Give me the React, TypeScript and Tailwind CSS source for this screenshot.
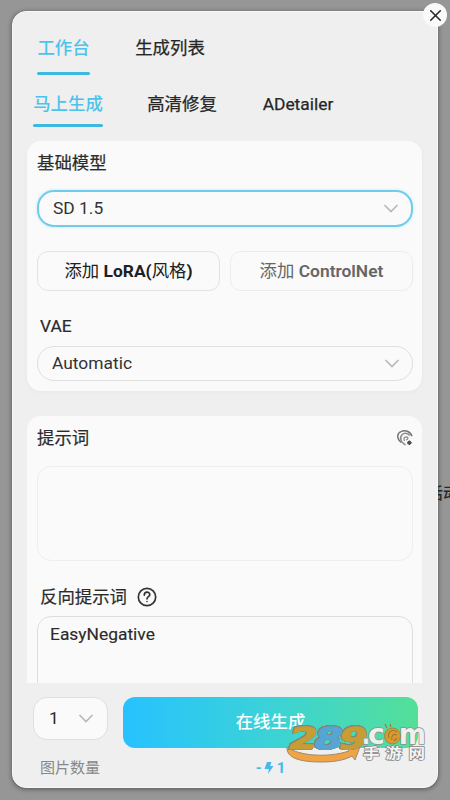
import { X } from "lucide-react";

const mainTabs = [
  { id: 1, title: "工作台", active: true, width: "w-[53px]", margin: "ml-[24px]" },
  { id: 2, title: "生成列表", active: false, width: "w-[70px]", margin: "ml-[45px]" },
];

const subTabs = [
  { id: 1, title: "马上生成", active: true, width: "w-[70px]", margin: "ml-[20px]" },
  { id: 2, title: "高清修复", active: false, width: "w-[70px]", margin: "ml-[44px]" },
  { id: 3, title: "ADetailer", active: false, width: "w-[72px]", margin: "ml-[45px]" },
];

function Tabs({ items, className }: { items: typeof mainTabs; className: string }) {
  return (
    <nav className={`flex ${className}`}>
      {items.map((tab) => (
        <button
          key={tab.id}
          className={`flex flex-col justify-between whitespace-nowrap text-[17.4px] leading-6 ${tab.width} ${tab.margin} ${
            tab.active ? "font-medium text-[#4dc3ea]" : "text-[#262626] [-webkit-text-stroke:0.25px_#262626]"
          }`}
        >
          <span>{tab.title}</span>
          {tab.active && <span className="h-[3px] w-full rounded-full bg-[#3cb9e3]" />}
        </button>
      ))}
    </nav>
  );
}

function Chevron() {
  return (
    <svg className="h-[9px] w-[14px]" viewBox="0 0 14 9" fill="none" stroke="#b9b9b9" strokeWidth="1.7">
      <path d="M1 1.5l6 6L13 1.5" strokeLinecap="round" />
    </svg>
  );
}

function Select({ value, className }: { value: string; className: string }) {
  return (
    <div
      className={`flex items-center justify-between rounded-[17px] pl-[14px] pr-[13px] text-[17.4px] text-[#333] ${className}`}
    >
      <span>{value}</span>
      <Chevron />
    </div>
  );
}

function HelpIcon() {
  return (
    <svg className="ml-[10px] h-5 w-5" viewBox="0 0 20 20" fill="none" stroke="#333" strokeWidth="1.7">
      <circle cx="10" cy="10" r="8.7" />
      <path d="M7.3 8.1c0-3.8 5.5-3.8 5.5-.4 0 1.9-2.8 2-2.8 4.1" strokeLinecap="round" />
      <circle cx="10" cy="14.5" r=".8" fill="#333" stroke="none" />
    </svg>
  );
}

function PaletteIcon() {
  return (
    <svg className="h-4 w-4" viewBox="0 0 16 16" fill="none" stroke="#777" strokeWidth="1.5">
      <path d="M4 12.5C-.5 9-.2 3.2 4 1.6 8-.3 13 1 15 6.3" />
      <path d="M8.5 15C4 13 2 8 5 4.8c2.5-2.5 6.4-1.4 7.6.8" stroke="#8c8c8c" />
      <path d="M7.5 11c-1.2-2.5-.5-4 1.5-4.2 1.8 0 2.4 1.4 1.4 2.4L9 10" stroke="#8c8c8c" strokeWidth="1.3" />
      <circle cx="12.3" cy="12.8" r="2" fill="#444" stroke="none" />
      <path d="M10 12.8h5M12.5 10.5v4.6" stroke="#555" strokeWidth="1" />
    </svg>
  );
}

function Watermark() {
  return (
    <svg className="absolute left-[285px] top-[720px] h-[46px] w-[148px] overflow-visible" viewBox="0 0 148 46">
      <path
        d="M2 27c-1 11 13 15 34 15 14 0 24-2 31-6l3 4 6-16-15 4 3 3c-21 7-50 5-62-4z"
        fill="#f2a343"
        stroke="#978c7b"
        strokeWidth="1"
      />
      <g
        className="[filter:drop-shadow(0.6px_0_0_#85867a)_drop-shadow(-0.6px_0_0_#85867a)_drop-shadow(0_0.6px_0_#85867a)_drop-shadow(0_-0.6px_0_#85867a)]"
        fontFamily="'DejaVu Sans', sans-serif"
        fontWeight="700"
        fontSize="30"
        strokeWidth="1.2"
        strokeLinejoin="miter"
      >
        <text transform="translate(2 28.5) skewX(-14)" textLength="28" lengthAdjust="spacingAndGlyphs" fill="#c79d35" stroke="#c79d35">2</text>
        <text transform="translate(27 28.5) skewX(-14)" textLength="28" lengthAdjust="spacingAndGlyphs" fill="#55a5d5" stroke="#55a5d5">8</text>
        <text transform="translate(52 28.5) skewX(-14)" textLength="28" lengthAdjust="spacingAndGlyphs" fill="#c79d35" stroke="#c79d35">9</text>
      </g>
      <g
        fontFamily="'DejaVu Sans', sans-serif"
        fontWeight="700"
        fontSize="28"
        fill="#efefef"
        stroke="#899486"
        strokeWidth="1.6"
        strokeLinejoin="round"
        paintOrder="stroke"
      >
        <text x="77" y="24" textLength="8" lengthAdjust="spacingAndGlyphs">.</text>
        <text x="83" y="24" textLength="17" lengthAdjust="spacingAndGlyphs">c</text>
        <text x="114" y="24" textLength="27" lengthAdjust="spacingAndGlyphs">m</text>
      </g>
      <circle cx="107.5" cy="16" r="8" fill="#d99b30" stroke="#9b8748" />
      <path d="M112 12c-5-4-10 1-8 6M112 15c-4-2-6 1-5 5M112 18l-3 3M102 8l-2-4M106 7l-1-3" fill="none" stroke="#9b772f" strokeWidth="1.1" />
      <g
        fontFamily="'Noto Sans CJK SC', sans-serif"
        fontWeight="700"
        fontSize="16.5"
        fill="#f5f5f5"
        stroke="#858585"
        strokeWidth="1.7"
        paintOrder="stroke"
      >
        <text transform="translate(78 38) scale(1 .86)">手</text>
        <text transform="translate(100.5 38) scale(1 .86)">游</text>
        <text transform="translate(123.5 38) scale(1 .86)">网</text>
      </g>
    </svg>
  );
}

export default function App() {
  return (
    <div className="relative h-[800px] w-[450px] overflow-hidden bg-[#969696] pl-3 pt-[11px] font-['Roboto','Noto_Sans_CJK_SC',sans-serif] text-[#2b2b2b]">
      <span className="absolute left-[427px] top-[484px] whitespace-nowrap text-[16px] font-medium leading-5 text-[#292929]">活动</span>

      <main className="relative flex h-[777px] w-[426px] flex-col overflow-hidden rounded-[14px] border border-[#f8f8f8] bg-[#efefef] shadow-[0_1px_5px_rgba(0,0,0,0.45)]">
        <header className="flex h-[129px] shrink-0 flex-col gap-[17px] pt-[23px]">
          <Tabs items={mainTabs} className="h-10 pt-px" />
          <Tabs items={subTabs} className="h-[35px]" />
        </header>

        <div className="flex min-h-0 flex-1 flex-col gap-[25px] overflow-hidden px-[14px]">
          <section className="h-[250px] w-[395px] shrink-0 rounded-[14px] bg-[#fafafa] pl-[10px] pr-[9px] pt-[10px] shadow-[0_1px_4px_rgba(0,0,0,0.035)]">
            <h2 className="text-[17.4px] leading-6 [-webkit-text-stroke:0.2px_#2b2b2b]">基础模型</h2>
            <Select value="SD 1.5" className="mt-[15px] h-[37px] border-2 border-[#71cce9] shadow-[0_0_3px_#b9eafa]" />
            <div className="mt-6 grid grid-cols-2 gap-[10px]">
              <button className="h-10 rounded-[11px] border-[1.5px] border-[#e3e3e3] text-[17.4px] text-[#202020]">
                添加 <span className="font-bold">LoRA(</span>风格<span className="font-bold">)</span>
              </button>
              <button className="h-10 rounded-[11px] border-[1.5px] border-[#ececec] text-[17.4px] text-[#666]">
                添加 <span className="font-semibold">ControlNet</span>
              </button>
            </div>
            <h2 className="ml-[3px] mt-[23px] text-[17.4px] leading-6 [-webkit-text-stroke:0.2px_#2b2b2b]">VAE</h2>
            <Select value="Automatic" className="mt-2 h-[35px] border-[1.5px] border-[#dfdfdf]" />
          </section>

          <section className="h-[300px] w-[395px] shrink-0 rounded-[14px] bg-[#fafafa] pl-[10px] pr-[9px] pt-[10px]">
            <div className="flex items-center justify-between">
              <h2 className="text-[17.4px] leading-6 [-webkit-text-stroke:0.2px_#2b2b2b]">提示词</h2>
              <PaletteIcon />
            </div>
            <div className="mt-4 h-[95px] rounded-[14px] border-[1.5px] border-[#eeeeee]" />
            <div className="mt-6 flex items-center pl-[3px]">
              <h2 className="text-[17.4px] leading-6 [-webkit-text-stroke:0.2px_#2b2b2b]">反向提示词</h2>
              <HelpIcon />
            </div>
            <div className="mt-[7px] h-[100px] rounded-[14px] border-[1.5px] border-[#dedede] px-3 pt-[5px] text-[17.4px] leading-6 [-webkit-text-stroke:0.15px_#2b2b2b]">
              EasyNegative
            </div>
          </section>
        </div>

        <footer className="flex h-[104px] shrink-0 gap-[15px] pl-5 pr-[19px] pt-[14px]">
          <div className="w-[75px]">
            <div className="flex h-[43px] items-center justify-between rounded-[14px] border border-[#dfdfdf] bg-[#fafafa] pl-[15px] pr-[14px] text-[17.4px]">
              <span>1</span>
              <Chevron />
            </div>
            <p className="ml-[7px] mt-4 whitespace-nowrap text-[15px] leading-6 text-[#888]">图片数量</p>
          </div>
          <div className="w-[295px]">
            <button className="h-[51px] w-full rounded-[12px] bg-linear-to-r from-[#27c2ff] via-[#3bd2d7] to-[#54df96] pb-px text-[17.4px] font-medium text-white">
              在线生成
            </button>
            <p className="mt-2 flex items-center justify-center gap-[2px] text-[15px] leading-6 text-[#47b8e8]">
              <span className="font-bold">-</span>
              <svg className="h-3 w-[10px]" viewBox="0 0 9 12" fill="currentColor">
                <path d="M2.5 0H7L5.6 4H9L3.5 12 4.4 7H0z" />
              </svg>
              <span className="ml-px font-bold">1</span>
            </p>
          </div>
        </footer>
      </main>

      <button className="absolute left-[423px] top-[3px] flex h-6 w-6 items-center justify-center rounded-full bg-[#f9f9f9]">
        <X className="h-[19px] w-[19px] text-[#292929]" strokeWidth={2} />
      </button>
      <Watermark />
    </div>
  );
}
